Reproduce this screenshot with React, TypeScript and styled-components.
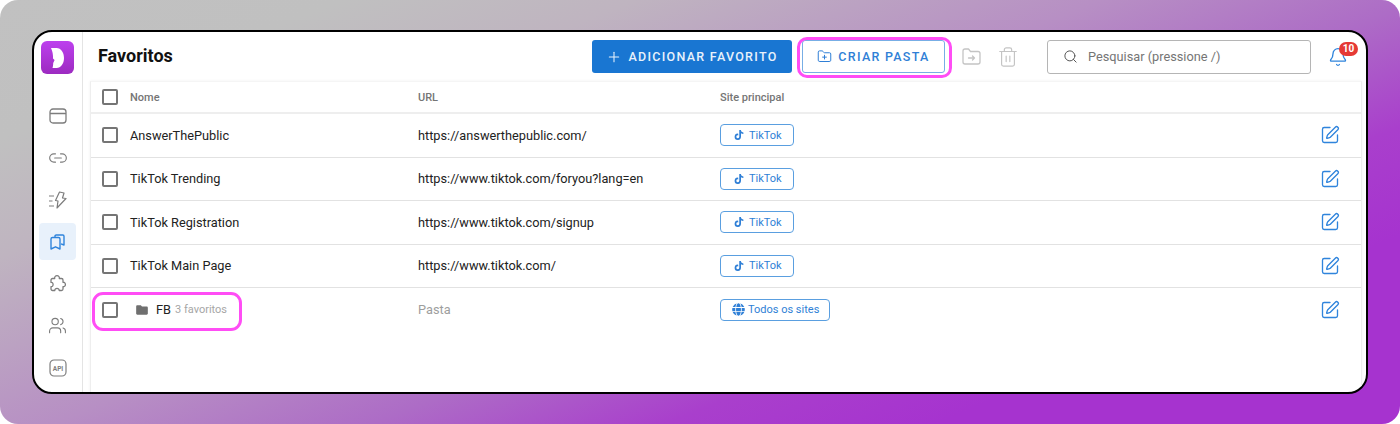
import React, { FC } from 'react';
import styled, { createGlobalStyle } from 'styled-components';
import { Bell, FolderPlus, Link2, Plus, Search, SquarePen, Trash2, Users } from 'lucide-react';
import { FaGlobe, FaTiktok } from 'react-icons/fa';
import { MdFolder } from 'react-icons/md';

const GlobalStyle = createGlobalStyle`
  html, body { margin: 0; padding: 0; background: #fff; }
  body { font-family: Roboto, "Liberation Sans", sans-serif; }
  *, *::before, *::after { box-sizing: border-box; }
`;

const Backdrop = styled.div`
  width: 1400px;
  height: 424px;
  padding: 30px 32px;
  border-radius: 18px;
  background: linear-gradient(
    158deg,
    #c1c1c1 0%,
    #c0c0c0 14%,
    #bfb4c0 26%,
    #b78fc4 45%,
    #ad6cc6 58%,
    #a93fcc 70%,
    #a633cf 81%
  );
`;

const AppWindow = styled.div`
  display: flex;
  width: 1336px;
  height: 364px;
  overflow: hidden;
  background: #fff;
  border: 2px solid #000;
  border-radius: 20px;
`;

const Sidebar = styled.nav`
  flex: none;
  width: 49px;
  display: flex;
  flex-direction: column;
  align-items: center;
  padding: 9px 1px 0 0;
  border-right: 1px solid #e4e4e4;
`;

const Logo = styled.div`
  flex: none;
  width: 33px;
  height: 33px;
  margin-bottom: 23px;
  display: flex;
  align-items: center;
  justify-content: center;
  border-radius: 6px;
  background: linear-gradient(180deg, #bd40ee 0%, #9c2bc0 100%);
`;

const NavItem = styled.div<{ $active?: boolean }>`
  flex: none;
  width: 37px;
  height: 37px;
  margin-bottom: 5px;
  display: flex;
  align-items: center;
  justify-content: center;
  border-radius: 4px;
  color: ${(p) => (p.$active ? '#2f84dc' : '#7d7d7d')};
  background: ${(p) => (p.$active ? '#e8f1fb' : 'transparent')};
`;

const Main = styled.main`
  flex: 1;
  min-width: 0;
  display: flex;
  flex-direction: column;
`;

const Toolbar = styled.header`
  flex: none;
  height: 49px;
  display: flex;
  align-items: center;
  padding-left: 15px;
`;

const Title = styled.h1`
  flex: 1;
  margin: 0 0 2px;
  font-size: 18px;
  font-weight: 700;
  color: #111;
`;

const PrimaryButton = styled.button`
  width: 200px;
  height: 33px;
  display: flex;
  align-items: center;
  justify-content: center;
  gap: 6px;
  padding: 0;
  border: 0;
  border-radius: 3px;
  background: #1976d2;
  color: #e8f1fb;
  font: 500 12.5px Roboto, sans-serif;
  letter-spacing: 1.28px;
`;

const Highlighted = styled.div`
  position: relative;
  margin-left: 10px;
  &::after {
    content: '';
    position: absolute;
    inset: -3px -7px -5px -5px;
    border: 3px solid #ff4df5;
    border-radius: 10px;
    pointer-events: none;
  }
`;

const OutlineButton = styled.button`
  width: 143px;
  height: 33px;
  display: flex;
  align-items: center;
  justify-content: center;
  gap: 6px;
  padding: 0;
  background: #fff;
  border: 1px solid #77aee5;
  border-radius: 3px;
  color: #2f7fd6;
  font: 500 12.5px Roboto, sans-serif;
  letter-spacing: 1.28px;
`;

const IconSlot = styled.div<{ $gap: number }>`
  display: flex;
  color: #c4c4c4;
  margin-left: ${(p) => p.$gap}px;
`;

const SearchBox = styled.div`
  width: 264px;
  height: 34px;
  margin-left: 28px;
  display: flex;
  align-items: center;
  gap: 10px;
  padding-left: 15px;
  border: 1px solid #b5b5b5;
  border-radius: 3px;
  color: #555;
  font-size: 12.75px;
`;

const Placeholder = styled.span`
  color: #757575;
`;

const BellWrap = styled.div`
  position: relative;
  display: flex;
  margin: 0 18px 0 17px;
  color: #2f84dc;
`;

const Badge = styled.span`
  position: absolute;
  top: -5px;
  left: 11px;
  width: 19px;
  height: 14px;
  display: flex;
  align-items: center;
  justify-content: center;
  border-radius: 7px;
  background: #e53935;
  color: #fff;
  font-size: 10px;
  font-weight: 700;
`;

const TableCard = styled.section`
  flex: 1;
  margin: 0 4px 0 7px;
  border-left: 1px solid #eee;
  border-right: 1px solid #eee;
  border-top: 1px solid #f5f5f5;
  box-shadow: 0 0 3px rgba(0, 0, 0, 0.06);
`;

const Row = styled.div<{ $head?: boolean }>`
  position: relative;
  display: grid;
  grid-template-columns: 327px 302px 1fr 41px;
  align-items: center;
  height: ${(p) => (p.$head ? '32px' : '43.5px')};
  border-bottom: ${(p) => (p.$head ? '2px solid #eee' : '1px solid #e2e2e2')};
  &:last-child {
    border-bottom: 0;
  }
`;

const NameCell = styled.div`
  display: flex;
  align-items: center;
  padding-left: 11px;
  font-size: 12.75px;
  color: #222;
`;

const Checkbox = styled.span`
  flex: none;
  width: 16px;
  height: 16px;
  margin-right: 12px;
  border: 2px solid #757575;
  border-radius: 2px;
`;

const HeadText = styled.span`
  font-size: 11px;
  font-weight: 500;
  color: #757575;
`;

const UrlCell = styled.div<{ $muted?: boolean }>`
  font-size: 12.75px;
  color: ${(p) => (p.$muted ? '#9e9e9e' : '#222')};
`;

const SiteChip = styled.span`
  display: inline-flex;
  align-items: center;
  justify-content: center;
  gap: 5px;
  height: 22px;
  padding: 0 11px 0 13px;
  border: 1px solid #5a9fe0;
  border-radius: 4px;
  color: #2f7fd6;
  font-size: 11px;
`;

const AllSitesChip = styled(SiteChip)`
  padding: 0 10px 0 11px;
  gap: 3px;
`;

const EditCell = styled.div`
  display: flex;
  color: #2f84dc;
`;

const FolderName = styled.div`
  position: relative;
  display: flex;
  align-items: center;
  gap: 4px;
  &::after {
    content: '';
    position: absolute;
    left: -10px;
    top: -10px;
    width: 150px;
    height: 39px;
    border: 3px solid #ff4df5;
    border-radius: 11px;
    pointer-events: none;
  }
`;

const FolderIcon = styled(MdFolder)`
  margin: 0 3px 0 1px;
  color: #6f6f6f;
`;

const FolderCount = styled.span`
  font-size: 11px;
  color: #a6a6a6;
`;

const LogoMark = () => (
  <svg width="13" height="20" viewBox="0 0 13 20">
    <path d="M0 0H5.500C10 0 13 4.500 13 10S10 20 5.500 20H1.500C2 18 2.200 17 2.200 15L3.600 12 2 10.500C2.200 7 1.500 3 0 0z" fill="#fff" />
  </svg>
);

const WindowIcon = () => (
  <svg width="18" height="16" viewBox="0 0 18 16" fill="none" stroke="currentColor" strokeWidth="1.300">
    <rect x="1" y="1" width="16" height="14" rx="3" />
    <path d="M1 5.500h16" />
  </svg>
);

const BoltIcon = () => (
  <svg width="18" height="18" viewBox="0 0 18 18" fill="none" stroke="currentColor" strokeWidth="1.200" strokeLinejoin="round">
    <path d="M10.500 1 6.500 9.500l2.500.5-1 7L17 7.500l-3.500-.5L15 2z" />
    <path d="M0 5h5M0 10h3.500M0 15h5" />
  </svg>
);

const BookmarksIcon = () => (
  <svg width="15" height="16" viewBox="0 0 15 16" fill="none" stroke="currentColor" strokeWidth="1.400" strokeLinejoin="round">
    <path d="M5 3.500V2.200C5 1.500 5.600 1 6.200 1h6.600c.7 0 1.200.5 1.200 1.200V11l-3-1.200" />
    <path d="M1 5c0-.9.700-1.500 1.500-1.500h6c.9 0 1.500.7 1.500 1.500v10l-4.500-2.200L1 15z" />
  </svg>
);

const PuzzleIcon = () => (
  <svg width="19" height="19" viewBox="0 0 19 19" fill="none" stroke="currentColor" strokeWidth="1.300" strokeLinejoin="round">
    <path d="M4.500 4.500h2.200c-.8-3.800 5.400-3.800 4.600 0h2.200c.7 0 1.500.6 1.500 1.500v2.300c3.200-.6 3.200 5 0 4.400V15c0 .8-.7 1.500-1.500 1.500h-2.300c.4-2.800-4.800-2.800-4.400 0H4.500C3.700 16.500 3 15.800 3 15v-2.300c2.800.5 2.800-4.800 0-4.300V6c0-.8.700-1.500 1.500-1.500z" />
  </svg>
);

const ApiIcon = () => (
  <svg width="18" height="18" viewBox="0 0 18 18">
    <rect x="1" y="1" width="16" height="16" rx="4" fill="none" stroke="currentColor" strokeWidth="1.200" />
    <text x="9" y="11.500" textAnchor="middle" fontSize="6.500" fontWeight="700" fontFamily="Roboto, sans-serif" fill="currentColor">
      API
    </text>
  </svg>
);

const MoveIcon = () => (
  <svg width="19" height="17" viewBox="0 0 19 17" fill="none" stroke="currentColor" strokeWidth="1.300" strokeLinecap="round" strokeLinejoin="round">
    <path d="M1 3c0-1.100.9-2 2-2h3.500l2 2.500H16c1.100 0 2 .9 2 2V14c0 1.100-.9 2-2 2H3c-1.100 0-2-.9-2-2z" />
    <path d="M6.500 10h6M10.500 8l2 2-2 2" />
  </svg>
);

const links = [
  { name: 'AnswerThePublic', url: 'https://answerthepublic.com/' },
  { name: 'TikTok Trending', url: 'https://www.tiktok.com/foryou?lang=en' },
  { name: 'TikTok Registration', url: 'https://www.tiktok.com/signup' },
  { name: 'TikTok Main Page', url: 'https://www.tiktok.com/' },
];

const EditButton: FC = () => (
  <EditCell>
    <SquarePen size={20} strokeWidth={1.6} />
  </EditCell>
);

const App: FC = () => (
  <>
    <GlobalStyle />
    <Backdrop>
      <AppWindow>
        <Sidebar>
          <Logo>
            <LogoMark />
          </Logo>
          <NavItem>
            <WindowIcon />
          </NavItem>
          <NavItem>
            <Link2 size={20} strokeWidth={1.4} />
          </NavItem>
          <NavItem>
            <BoltIcon />
          </NavItem>
          <NavItem $active>
            <BookmarksIcon />
          </NavItem>
          <NavItem>
            <PuzzleIcon />
          </NavItem>
          <NavItem>
            <Users size={19} strokeWidth={1.4} />
          </NavItem>
          <NavItem>
            <ApiIcon />
          </NavItem>
        </Sidebar>
        <Main>
          <Toolbar>
            <Title>Favoritos</Title>
            <PrimaryButton>
              <Plus size={16} strokeWidth={1.6} />
              ADICIONAR FAVORITO
            </PrimaryButton>
            <Highlighted>
              <OutlineButton>
                <FolderPlus size={15} strokeWidth={1.6} />
                CRIAR PASTA
              </OutlineButton>
            </Highlighted>
            <IconSlot $gap={17}>
              <MoveIcon />
            </IconSlot>
            <IconSlot $gap={16}>
              <Trash2 size={22} strokeWidth={1.3} />
            </IconSlot>
            <SearchBox>
              <Search size={15} strokeWidth={1.6} />
              <Placeholder>Pesquisar (pressione /)</Placeholder>
            </SearchBox>
            <BellWrap>
              <Bell size={20} strokeWidth={1.6} />
              <Badge>10</Badge>
            </BellWrap>
          </Toolbar>
          <TableCard>
            <Row $head>
              <NameCell>
                <Checkbox />
                <HeadText>Nome</HeadText>
              </NameCell>
              <HeadText>URL</HeadText>
              <HeadText>Site principal</HeadText>
              <span />
            </Row>
            {links.map((link) => (
              <Row key={link.name}>
                <NameCell>
                  <Checkbox />
                  {link.name}
                </NameCell>
                <UrlCell>{link.url}</UrlCell>
                <div>
                  <SiteChip>
                    <FaTiktok size={10} />
                    TikTok
                  </SiteChip>
                </div>
                <EditButton />
              </Row>
            ))}
            <Row>
              <NameCell>
                <FolderName>
                  <Checkbox />
                  <FolderIcon size={14} />
                  FB <FolderCount>3 favoritos</FolderCount>
                </FolderName>
              </NameCell>
              <UrlCell $muted>Pasta</UrlCell>
              <div>
                <AllSitesChip>
                  <FaGlobe size={13} />
                  Todos os sites
                </AllSitesChip>
              </div>
              <EditButton />
            </Row>
          </TableCard>
        </Main>
      </AppWindow>
    </Backdrop>
  </>
);

export default App;
